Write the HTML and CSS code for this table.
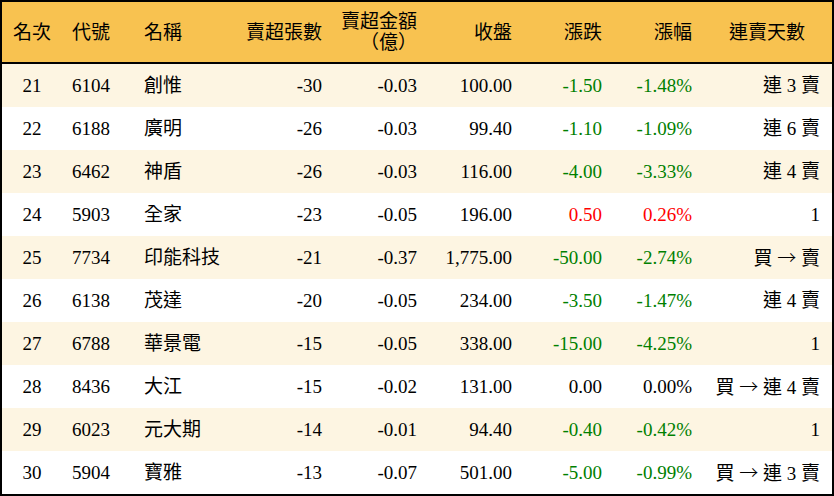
FILE: index.html
```html
<!DOCTYPE html>
<html lang="zh-Hant">
<head>
<meta charset="utf-8">
<title>賣超排行</title>
<link rel="stylesheet" href="styles.css">
</head>
<body>
<div class="board">
  <div class="row head">
    <div class="c c1">名次</div>
    <div class="c c2">代號</div>
    <div class="c c3">名稱</div>
    <div class="c r">賣超張數</div>
    <div class="c r two">賣超金額<br>（億）</div>
    <div class="c r">收盤</div>
    <div class="c r">漲跌</div>
    <div class="c r">漲幅</div>
    <div class="c mid">連賣天數</div>
  </div>
  <div class="row odd"><div class="c c1">21</div><div class="c c2">6104</div><div class="c c3">創惟</div><div class="c r">-30</div><div class="c r">-0.03</div><div class="c r">100.00</div><div class="c r dn">-1.50</div><div class="c r dn">-1.48%</div><div class="c r last">連 3 賣</div></div>
  <div class="row"><div class="c c1">22</div><div class="c c2">6188</div><div class="c c3">廣明</div><div class="c r">-26</div><div class="c r">-0.03</div><div class="c r">99.40</div><div class="c r dn">-1.10</div><div class="c r dn">-1.09%</div><div class="c r last">連 6 賣</div></div>
  <div class="row odd"><div class="c c1">23</div><div class="c c2">6462</div><div class="c c3">神盾</div><div class="c r">-26</div><div class="c r">-0.03</div><div class="c r">116.00</div><div class="c r dn">-4.00</div><div class="c r dn">-3.33%</div><div class="c r last">連 4 賣</div></div>
  <div class="row"><div class="c c1">24</div><div class="c c2">5903</div><div class="c c3">全家</div><div class="c r">-23</div><div class="c r">-0.05</div><div class="c r">196.00</div><div class="c r up">0.50</div><div class="c r up">0.26%</div><div class="c r last">1</div></div>
  <div class="row odd"><div class="c c1">25</div><div class="c c2">7734</div><div class="c c3">印能科技</div><div class="c r">-21</div><div class="c r">-0.37</div><div class="c r">1,775.00</div><div class="c r dn">-50.00</div><div class="c r dn">-2.74%</div><div class="c r last">買 <span class="arrow">→</span> 賣</div></div>
  <div class="row"><div class="c c1">26</div><div class="c c2">6138</div><div class="c c3">茂達</div><div class="c r">-20</div><div class="c r">-0.05</div><div class="c r">234.00</div><div class="c r dn">-3.50</div><div class="c r dn">-1.47%</div><div class="c r last">連 4 賣</div></div>
  <div class="row odd"><div class="c c1">27</div><div class="c c2">6788</div><div class="c c3">華景電</div><div class="c r">-15</div><div class="c r">-0.05</div><div class="c r">338.00</div><div class="c r dn">-15.00</div><div class="c r dn">-4.25%</div><div class="c r last">1</div></div>
  <div class="row"><div class="c c1">28</div><div class="c c2">8436</div><div class="c c3">大江</div><div class="c r">-15</div><div class="c r">-0.02</div><div class="c r">131.00</div><div class="c r">0.00</div><div class="c r">0.00%</div><div class="c r last">買 <span class="arrow">→</span> 連 4 賣</div></div>
  <div class="row odd"><div class="c c1">29</div><div class="c c2">6023</div><div class="c c3">元大期</div><div class="c r">-14</div><div class="c r">-0.01</div><div class="c r">94.40</div><div class="c r dn">-0.40</div><div class="c r dn">-0.42%</div><div class="c r last">1</div></div>
  <div class="row"><div class="c c1">30</div><div class="c c2">5904</div><div class="c c3">寶雅</div><div class="c r">-13</div><div class="c r">-0.07</div><div class="c r">501.00</div><div class="c r dn">-5.00</div><div class="c r dn">-0.99%</div><div class="c r last">買 <span class="arrow">→</span> 連 3 賣</div></div>
</div>
</body>
</html>
```

FILE: styles.css
```css
html, body {
  margin: 0;
  padding: 0;
  background: #ffffff;
}

.board {
  box-sizing: border-box;
  width: 834px;
  height: 496px;
  border: 2px solid #000;
  background: #fff;
  font-family: "Liberation Serif", "Noto Sans CJK TC", serif;
  font-size: 19px;
  color: #000;
  display: flex;
  flex-direction: column;
}

.row {
  display: grid;
  grid-template-columns: 60px 70px 100px 100px 95px 95px 90px 90px 130px;
  height: 43px;
  align-items: center;
  background: #ffffff;
}

.row.odd {
  background: #fdf5e2;
}

.row.head {
  height: 60px;
  background: #f8c250;
  border-bottom: 2px solid #000;
  box-sizing: content-box;
}

.c {
  white-space: nowrap;
  line-height: 21px;
}

.c1 {
  text-align: center;
}

.c2 {
  padding-left: 10px;
}

.c3 {
  padding-left: 12px;
}

.r {
  text-align: right;
  padding-right: 10px;
}

.r.last {
  padding-right: 12px;
}

.mid {
  text-align: center;
}

.two {
  line-height: 21px;
}

.arrow {
  font-family: "Noto Sans CJK TC", sans-serif;
  font-weight: 300;
}

.dn {
  color: #008000;
}

.up {
  color: #ff0000;
}
```
